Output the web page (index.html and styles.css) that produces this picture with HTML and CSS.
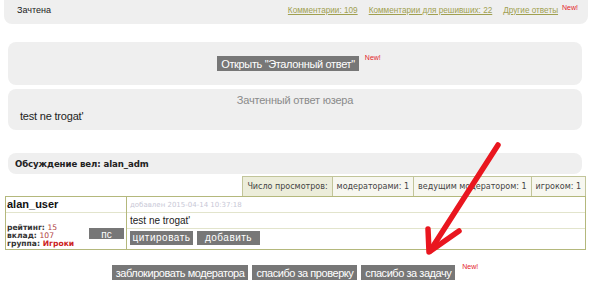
FILE: index.html
```html
<!DOCTYPE html>
<html>
<head>
<meta charset="utf-8">
<link rel="stylesheet" href="styles.css">
</head>
<body>
<div class="page">
  <div class="panel top">
    <span class="status">Зачтена</span>
    <div class="links">
      <a href="#">Комментарии: 109</a>
      <a href="#">Комментарии для решивших: 22</a>
      <span class="lastlink"><a href="#">Другие ответы</a><sup class="new">New!</sup></span>
    </div>
  </div>

  <div class="panel etalon">
    <span class="btn big">Открыть "Эталонный ответ"</span><sup class="new">New!</sup>
  </div>

  <div class="panel answer">
    <div class="answer-title">Зачтенный ответ юзера</div>
    <div class="answer-text">test ne trogat'</div>
  </div>

  <div class="panel discuss">Обсуждение вел: alan_adm</div>

  <div class="views">
    <span class="vcell first">Число просмотров:</span>
    <span class="vcell">модераторами: 1</span>
    <span class="vcell">ведущим модератором: 1</span>
    <span class="vcell">игроком: 1</span>
  </div>

  <div class="post">
    <div class="user">
      <div class="uname">alan_user</div>
      <div class="uinfo">
        <div class="stats">
          <div>рейтинг: <span class="val">15</span></div>
          <div>вклад: <span class="val">107</span></div>
          <div>группа: <span class="grp">Игроки</span></div>
        </div>
        <span class="btn small ps">пс</span>
      </div>
    </div>
    <div class="msg">
      <div class="date">добавлен 2015-04-14 10:37:18</div>
      <div class="text">test ne trogat'</div>
      <div class="actions">
        <span class="btn small act">цитировать</span>
        <span class="btn small act">добавить</span>
      </div>
    </div>
  </div>

  <div class="bottom">
    <span class="btn big">заблокировать модератора</span>
    <span class="btn big">спасибо за проверку</span>
    <span class="btn big">спасибо за задачу</span><sup class="new">New!</sup>
  </div>

  <svg class="arrow" width="120" height="130" viewBox="0 0 120 130">
    <path d="M98 7 L30 113" stroke="#e9161f" stroke-width="5.5" fill="none" stroke-linecap="round"/>
    <path d="M28 91 L29 114 L59 93" stroke="#e9161f" stroke-width="5.5" fill="none" stroke-linecap="round" stroke-linejoin="round"/>
  </svg>
</div>
</body>
</html>
```
FILE: styles.css
```css
* { box-sizing: border-box; }
html, body { margin: 0; padding: 0; background: #fff; }
body { width: 600px; height: 302px; overflow: hidden; font-family: "DejaVu Sans", Verdana, sans-serif; font-size: 10px; color: #222; }
.page { position: relative; padding-bottom: 20px; }

.panel { background: #efefef; border-radius: 8px; }

.top {
  margin: 0 12px 0 4px;
  height: 24px;
  border-radius: 0 0 8px 8px;
  display: flex;
  align-items: center;
  justify-content: space-between;
  padding: 0 10px 4px 13px;
}
.status { font-family: "Liberation Sans", Arial, sans-serif; font-size: 9px; color: #222; }
.links { display: flex; align-items: center; gap: 11px; font-family: "Liberation Sans", Arial, sans-serif; font-size: 8.2px; }
.links a { color: #a0a050; text-decoration: underline; }
.lastlink { display: flex; align-items: flex-start; }
.lastlink .new { margin-left: 4px; top: -2px; }
.new { color: #e3242b; font-family: "Liberation Sans", Arial, sans-serif; font-size: 7px; vertical-align: top; position: relative; top: -3px; margin-left: 6px; line-height: 8px; }

.etalon {
  margin: 18px 18px 0 8px;
  height: 43px;
  display: flex;
  align-items: center;
  justify-content: center;
  padding-left: 8px;
}
.etalon .new { top: -6px; }

.btn { display: inline-block; background: #777; color: #fff; font-family: "Liberation Sans", Arial, sans-serif; }
.btn.big { font-size: 11px; letter-spacing: -0.35px; padding: 1px 4px 0; height: 15px; line-height: 14px; }
.btn.small { font-size: 10px; text-align: center; line-height: 13px; }

.answer { margin: 4px 18px 0 8px; height: 41px; padding: 4px 12px 0; }
.answer-title { text-align: center; font-family: "Liberation Sans", Arial, sans-serif; font-size: 11px; color: #8a8a8a; line-height: 14px; letter-spacing: -0.2px; }
.answer-text { font-family: "Liberation Sans", Arial, sans-serif; font-size: 11px; color: #222; margin-top: 3px; letter-spacing: -0.2px; }

.discuss { margin: 23px 18px 0 8px; height: 21px; padding: 0 7px; font-weight: bold; font-size: 8.6px; letter-spacing: -0.1px; display: flex; align-items: center; color: #222; }

.views { display: flex; justify-content: flex-end; margin: 2px 14px 0 0; height: 20px; }
.vcell { border: 1px solid #c2c59a; border-bottom: none; padding: 0 4px; font-family: "DejaVu Sans", Verdana, sans-serif; font-size: 8px; color: #444; display: flex; align-items: center; background: #f7f7f0; }
.vcell + .vcell { border-left: none; }
.vcell.first { background: #ecedda; }

.post { display: flex; margin: 0 14px 0 5px; border: 1px solid #b4b87c; height: 54px; }
.user { width: 121px; border-right: 1px solid #b4b87c; display: flex; flex-direction: column; }
.uname { font-family: "Liberation Sans", Arial, sans-serif; font-weight: bold; font-size: 11px; padding: 1px 1px 0; height: 16px; border-bottom: 1px solid #e2e4cc; color: #111; }
.uinfo { flex: 1; display: flex; align-items: flex-end; justify-content: space-between; padding: 0 2px 1px 1px; }
.stats { font-weight: bold; font-size: 7.6px; line-height: 8px; color: #333; }
.stats .val { color: #b04040; font-weight: normal; }
.stats .grp { color: #cc2222; }
.ps { width: 35px; height: 11px; line-height: 11px; margin-bottom: 9px; font-size: 9px; }

.msg { flex: 1; display: flex; flex-direction: column; }
.date { height: 16px; border-bottom: 1px solid #e2e4cc; color: #c8c8d6; font-size: 7px; padding: 4px 3px 0; }
.text { height: 16px; border-bottom: 1px solid #e2e4cc; font-family: "Liberation Sans", Arial, sans-serif; font-size: 10px; padding: 2px 3px 0; color: #222; }
.actions { display: flex; gap: 4px; padding: 2px 3px 0; }
.act { width: 63px; height: 14px; line-height: 14px; font-size: 9px; letter-spacing: 0.5px; }

.bottom { display: flex; justify-content: center; align-items: flex-start; gap: 4px; margin-top: 15px; padding-right: 10px; }
.bottom .btn.big { letter-spacing: -0.45px; }
.bottom .new { top: -2px; margin-left: 3px; }

.arrow { position: absolute; left: 400px; top: 138px; }
```
